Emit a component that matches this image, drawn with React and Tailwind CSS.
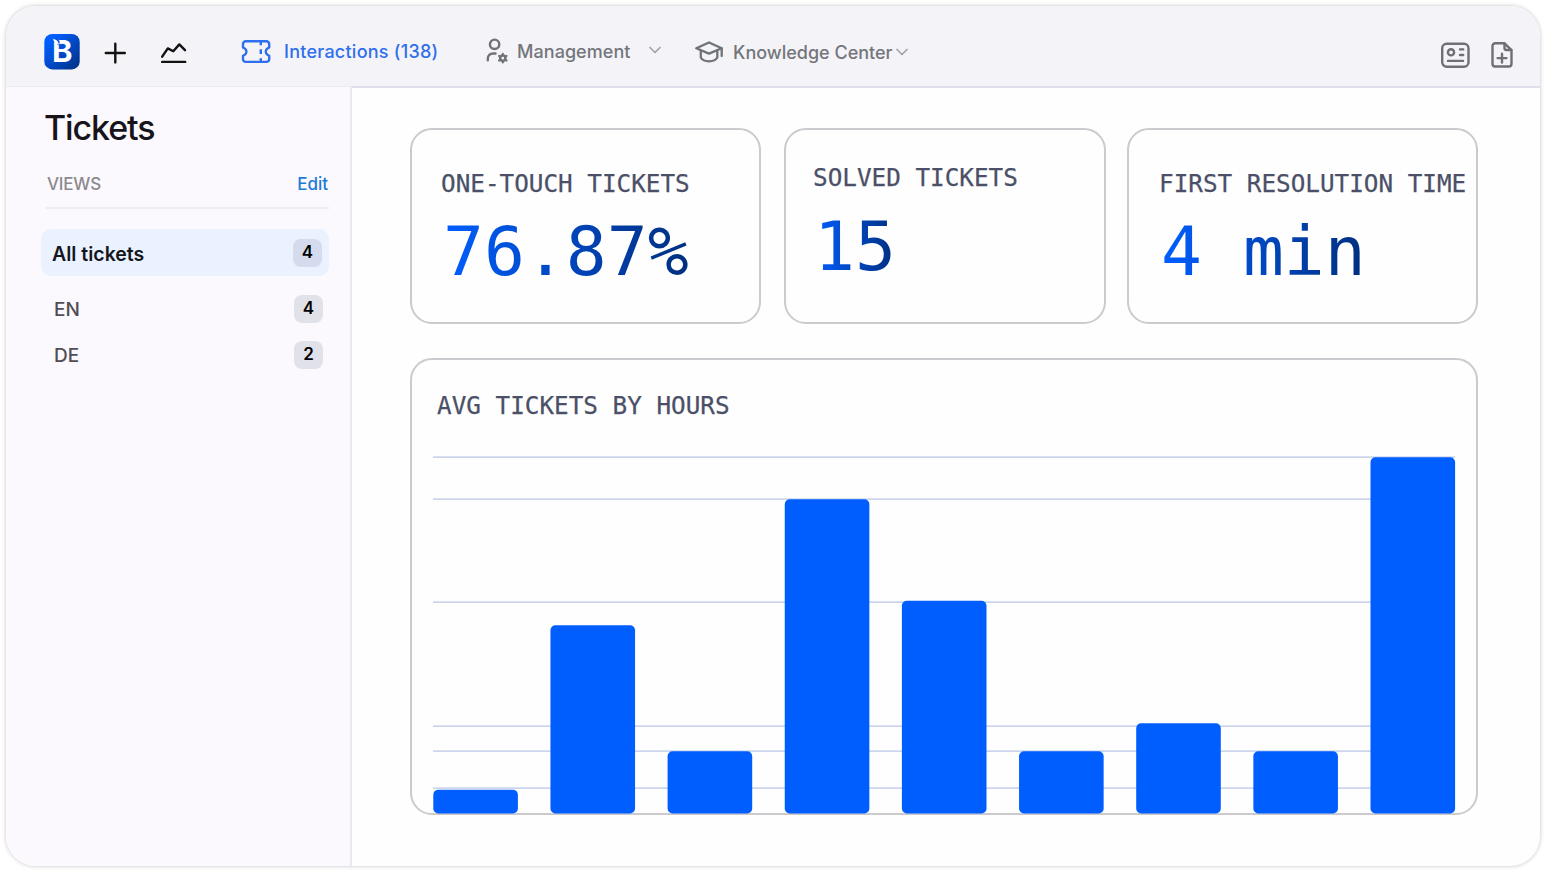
import React from 'react';

const views = [
  { name: 'EN', count: 4 },
  { name: 'DE', count: 2 }
];

const barTops = [332.5, 168, 294, 42, 143.5, 294, 266, 294, 0];
const gridLines = [0, 42, 145, 269, 294, 331];

function Logo() {
  return (
    <svg className="block h-9 w-9 shrink-0 overflow-visible" viewBox="0 0 36 36">
      <defs>
        <linearGradient id="logoFill" x1="0" y1="0" x2="1" y2="1">
          <stop offset="0.15" stopColor="#005eff" />
          <stop offset="1" stopColor="#002f80" />
        </linearGradient>
      </defs>
      <rect x="0.3" y="0" width="35.4" height="35.4" rx="8" fill="url(#logoFill)" />
      <text x="8" y="28.4" fontFamily="Inter, sans-serif" fontWeight="700" fontSize="30" textLength="20.500" lengthAdjust="spacingAndGlyphs" fill="#fff">B</text>
      <path d="M8.500 5h7.500v3.200L14.300 11.500l-1.800-2-3.500-1z" fill="#0056ea" />
      <path d="M8.700 5.200c3.600 0 5.600 1.600 6.200 5.400l-4.800-.8c.6-1.200-.1-3.200-1.400-4.600z" fill="#fff" />
      <path d="M14 5.600c2 .6 3.400 2 3.600 4.600l-1.600-.4c-.1-1.800-.8-3.100-2-4.200z" fill="#fff" />
    </svg>
  );
}

function PlusIcon() {
  return (
    <svg className="block h-6 w-6 shrink-0" viewBox="0 0 24 24" fill="none" stroke="#111" strokeWidth="2.4" strokeLinecap="round">
      <path d="M12.300 2.600v18.800M2.800 12h19" />
    </svg>
  );
}

function TrendIcon() {
  return (
    <svg className="block h-6 w-[27px] shrink-0" viewBox="0 0 27 24" fill="none" stroke="#111" strokeWidth="2.4" strokeLinecap="round" strokeLinejoin="round">
      <path d="M2.200 15.700l5.600-8.300 5.500 2.800 6-6.800 5.700 5.800M2.200 20.900h23" />
    </svg>
  );
}

function TicketIcon() {
  return (
    <svg className="block h-6 w-[30px] shrink-0" viewBox="0 0 30 24" fill="none" stroke="#2f6fed" strokeWidth="2.4" strokeLinejoin="round">
      <path d="M4.700 1.300h20.800a2.700 2.700 0 0 1 2.700 2.700v3.400l-1.800 1.100c-2.200 1.500-2.200 4.700 0 6.200l1.800 1.100v3.400a2.700 2.700 0 0 1-2.700 2.700H4.700A2.700 2.700 0 0 1 2 19.200v-3.400l1.800-1.100c2.200-1.500 2.200-4.700 0-6.200L2 7.400V4a2.700 2.700 0 0 1 2.700-2.700z" />
      <path d="M19.800 2v3.200M19.800 9.300v4.700M19.800 18.200v3.500" />
    </svg>
  );
}

function UserGearIcon() {
  return (
    <svg className="block h-[26px] w-6 shrink-0" viewBox="0 0 24 26" fill="none" stroke="#6f7377" strokeWidth="2.4" strokeLinecap="round">
      <circle cx="9.600" cy="6.300" r="4.700" />
      <path d="M2.800 22.300v-1.500c0-3.300 2.300-5.300 5.200-5.300h2.500" />
      <circle cx="17.800" cy="20.200" r="2.600" strokeWidth="2.500" />
      <path d="M17.800 16.300v-.4M17.800 24.500v-.4M14.500 18.200l-.4-.2M21.500 22.400l-.4-.2M14.500 22.200l-.4.2M21.500 18l-.4.2" strokeWidth="2.200" />
    </svg>
  );
}

function CapIcon() {
  return (
    <svg className="block h-[22px] w-7 shrink-0" viewBox="0 0 28 22" fill="none" stroke="#6f7377" strokeWidth="2.3" strokeLinecap="round" strokeLinejoin="round">
      <path d="M1.300 7.300L14 1.500l12.700 5.800L14 12.600z" />
      <path d="M5.800 10v6.500c1.600 2.700 4.600 3.800 8.200 3.800s6.700-1.100 8.300-3.800V10M26.700 7.500v7.500" />
    </svg>
  );
}

function Chevron() {
  return (
    <svg className="block h-2 w-3 shrink-0" viewBox="0 0 12 8" fill="none" stroke="#a2a4a9" strokeWidth="1.700" strokeLinecap="round" strokeLinejoin="round">
      <path d="M1 1.500l5 5 5-5" />
    </svg>
  );
}

function ContactIcon() {
  return (
    <svg className="block h-[26px] w-[30px] shrink-0" viewBox="0 0 30 26" fill="none" stroke="#6f7074" strokeWidth="2.400" strokeLinecap="round">
      <rect x="2.200" y="1.700" width="26.300" height="23" rx="4.500" />
      <circle cx="11" cy="10.300" r="3.100" />
      <path d="M20 7.400h3.200M20 13h3.200M8 18.900h15" />
    </svg>
  );
}

function FilePlusIcon() {
  return (
    <svg className="block h-[26px] w-[22px] shrink-0" viewBox="0 0 22 26" fill="none" stroke="#6f7074" strokeWidth="2.400" strokeLinecap="round" strokeLinejoin="round">
      <path d="M13.500 1.300H4.200a2.700 2.700 0 0 0-2.700 2.700v17.800a2.700 2.700 0 0 0 2.700 2.700h13.600a2.700 2.700 0 0 0 2.700-2.700V8.200z" />
      <path d="M13.500 1.500v4.400c0 1.300.8 2.100 2.100 2.100h4.700M11 11.700v8.800M6.600 16.100h8.800" />
    </svg>
  );
}

function Count({ value, active }) {
  return (
    <span className={`flex h-7 w-[29px] items-center justify-center rounded-lg text-[17px] font-semibold text-black ${active ? 'bg-[#d3dbed]' : 'bg-[#e1e2e9]'}`}>
      {value}
    </span>
  );
}

function StatCard({ label, value, className, valueClassName = 'ml-0.5 mt-3' }) {
  return (
    <div className={`h-[196px] shrink-0 rounded-[22px] border-2 border-[#cccacf] font-['DejaVu_Sans_Mono',monospace] ${className}`}>
      <div className="whitespace-nowrap text-[24.300px] leading-8 text-[#4b5068] [-webkit-text-stroke:0.25px_#4b5068]">{label}</div>
      <div className={`w-fit whitespace-nowrap bg-linear-to-r from-[#005eff] to-[#002f80] bg-clip-text text-[68px] leading-[80px] text-transparent ${valueClassName}`}>{value}</div>
    </div>
  );
}

function HoursChart() {
  return (
    <svg className="ml-[21px] mt-[35px] block overflow-visible" width="1024" height="358" viewBox="0 0 1024 358">
      {gridLines.map((y) => (
        <rect key={y} x="0" y={y - 0.700} width="1022" height="1.700" fill="#cbd4ec" />
      ))}
      {barTops.map((top, i) => (
        <rect key={i} x={0.300 + i * 117.150} y={top + 0.200} width="84.600" height={356.300 - top} rx="5" fill="#005eff" />
      ))}
    </svg>
  );
}

export default function App() {
  return (
    <div className="h-[873px] w-[1547px] overflow-hidden bg-white p-1.5 font-[Inter,sans-serif]">
      <div className="flex h-[860px] w-[1534px] flex-col overflow-hidden rounded-[30px] bg-[#fefefe] shadow-[0_0_4px_rgba(0,0,0,0.24)]">
        <header className="flex h-20 shrink-0 items-center bg-[#f4f3f7] text-[18px] font-medium text-[#73767b]">
          <div className="ml-[38px] mt-3"><Logo /></div>
          <div className="ml-[23px] mt-[13px]"><PlusIcon /></div>
          <div className="ml-[33px] mt-[13px]"><TrendIcon /></div>
          <div className="ml-[54px] mt-[11px]"><TicketIcon /></div>
          <span className="ml-[13px] mt-[11px] w-[201px] whitespace-nowrap tracking-[0.25px] text-[#2f6fed]">Interactions (138)</span>
          <div className="mt-[9px]"><UserGearIcon /></div>
          <span className="ml-2 mt-[10px] w-[132px] whitespace-nowrap tracking-[0.05px]">Management</span>
          <div className="mt-[7px]"><Chevron /></div>
          <div className="ml-[34px] mt-[11px]"><CapIcon /></div>
          <span className="ml-[10px] mt-[12px] w-[163px] whitespace-nowrap">Knowledge Center</span>
          <div className="mt-[11px]"><Chevron /></div>
          <div className="ml-auto mt-[18px]"><ContactIcon /></div>
          <div className="ml-[21px] mr-[27px] mt-[18px]"><FilePlusIcon /></div>
        </header>
        <div className="flex min-h-0 flex-1">
          <aside className="flex w-[346px] shrink-0 flex-col border-r-2 border-t border-r-[#e7e9f2] border-t-[#ebeaf0] bg-[#fbf9fd] pl-[35px] pr-[21px]">
            <h1 className="ml-[3px] mt-5 text-[34px] font-medium leading-[42px] tracking-[-1.100px] text-[#17151b]">Tickets</h1>
            <div className="ml-[5px] mt-[8px] flex h-[52px] shrink-0 justify-between border-b-2 border-[#ececf1] pl-px pr-px pt-[15px] text-[17px] leading-6 font-medium">
              <span className="tracking-[-0.2px] text-[#8b898e]">VIEWS</span>
              <span className="text-[#1c7ad9]">Edit</span>
            </div>
            <div className="mt-5 flex h-[47px] shrink-0 items-center justify-between rounded-[10px] bg-[#eaf1ff] pl-[11px] pr-[7px]">
              <span className="mt-[4px] text-[19.500px] font-semibold text-[#14161c]">All tickets</span>
              <Count value={4} active />
            </div>
            <div className="mt-[10px] flex flex-col">
              {views.map((view) => (
                <div key={view.name} className="flex h-[46px] items-center justify-between pl-[13px] pr-1.5">
                  <span className="mt-0.5 text-[19px] font-medium text-[#504e54]">{view.name}</span>
                  <Count value={view.count} />
                </div>
              ))}
            </div>
          </aside>
          <main className="flex flex-1 flex-col border-t-2 border-[#dfdeea] pl-[58px] pt-[40px]">
            <div className="flex">
              <StatCard label="ONE-TOUCH TICKETS" value="76.87%" className="w-[351px] pl-[29px] pt-[38px]" />
              <StatCard label="SOLVED TICKETS" value="15" className="ml-[23px] w-[322px] pl-[27px] pt-8" valueClassName="ml-px mt-[13px]" />
              <StatCard label="FIRST RESOLUTION TIME" value="4 min" className="ml-[21px] w-[351px] pl-[30px] pt-[38px]" />
            </div>
            <section className="mt-[34px] h-[457px] w-[1068px] shrink-0 rounded-[22px] border-2 border-[#cccacf] pt-[30px]">
              <h2 className="ml-[25px] whitespace-nowrap font-['DejaVu_Sans_Mono',monospace] text-[24.300px] leading-8 text-[#4b5068] [-webkit-text-stroke:0.25px_#4b5068]">AVG TICKETS BY HOURS</h2>
              <HoursChart />
            </section>
          </main>
        </div>
      </div>
    </div>
  );
}
